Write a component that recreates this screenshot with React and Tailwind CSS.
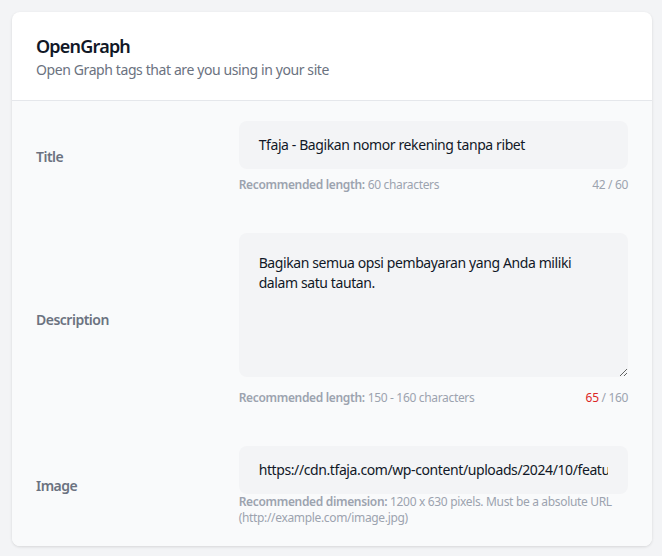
import React from "react";

export default function App() {
  const font = { fontFamily: '"Noto Sans", "Open Sans", sans-serif' };
  return (
    <div className="min-h-[556px] bg-[#f3f4f6] p-3" style={font}>
      <div className="w-[640px] overflow-hidden rounded-lg bg-white shadow-[0_1px_3px_rgba(0,0,0,0.12)]">
        <div className="border-b border-[#e5e7eb] px-6 py-5">
          <h2 className="text-lg leading-7 font-semibold tracking-[-0.8px] text-[#111827]">OpenGraph</h2>
          <p className="text-sm leading-5 tracking-[-0.4px] text-[#6b7280]">Open Graph tags that are you using in your site</p>
        </div>
        <div className="flex flex-col gap-10 bg-[#f9fafb] px-6 pt-5 pb-5">
          <div className="grid grid-cols-3 items-center gap-4">
            <div className="text-sm font-semibold tracking-[-0.5px] text-[#6b7280]">Title</div>
            <div className="col-span-2">
              <div className="rounded-lg bg-[#f3f4f6] px-5 py-3.5 text-sm leading-5 tracking-[-0.4px] text-[#111827]">
                Tfaja - Bagikan nomor rekening tanpa ribet
              </div>
              <div className="mt-2 flex justify-between text-xs leading-4 tracking-[-0.33px] text-[#9ca3af]">
                <span><span className="font-semibold">Recommended length:</span> 60 characters</span>
                <span>42 / 60</span>
              </div>
            </div>
          </div>
          <div className="grid grid-cols-3 items-center gap-4">
            <div className="text-sm font-semibold tracking-[-0.5px] text-[#6b7280]">Description</div>
            <div className="col-span-2">
              <textarea
                readOnly
                className="block h-36 w-full rounded-lg bg-[#f3f4f6] px-5 py-5 text-sm leading-5 tracking-[-0.4px] text-[#111827] outline-none"
                style={font}
                defaultValue={"Bagikan semua opsi pembayaran yang Anda miliki\ndalam satu tautan."}
              />
              <div className="mt-[13px] flex justify-between text-xs leading-4 tracking-[-0.33px] text-[#9ca3af]">
                <span><span className="font-semibold">Recommended length:</span> 150 - 160 characters</span>
                <span><span className="text-[#dc2626]">65</span> / 160</span>
              </div>
            </div>
          </div>
          <div className="grid grid-cols-3 items-center gap-4">
            <div className="text-sm font-semibold tracking-[-0.5px] text-[#6b7280]">Image</div>
            <div className="col-span-2">
              <div className="rounded-lg bg-[#f3f4f6] px-5 py-3.5 text-sm leading-5 tracking-[-0.4px] text-[#111827]">
                <div className="overflow-hidden whitespace-nowrap">
                  https://cdn.tfaja.com/wp-content/uploads/2024/10/featured-image-tfaja.jpg
                </div>
              </div>
              <div className="text-xs leading-4 tracking-[-0.33px] text-[#9ca3af]">
                <span className="font-semibold">Recommended dimension:</span> 1200 x 630 pixels. Must be a absolute URL (http://example.com/image.jpg)
              </div>
            </div>
          </div>
        </div>
      </div>
    </div>
  );
}
